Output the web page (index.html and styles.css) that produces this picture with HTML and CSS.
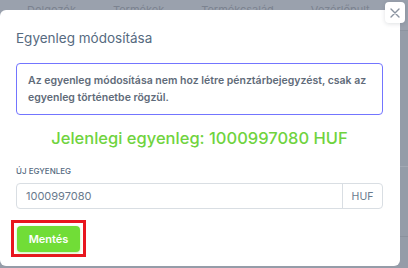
FILE: index.html
```html
<!DOCTYPE html>
<html>
<head>
    <title>Egyenleg módosítása</title>
    <link rel="stylesheet" href="styles.css">
</head>
<body>

    <div class="page">
        <div class="tabs">
            <span class="tab">Dolgozók</span>
            <span class="tab">Termékek</span>
            <span class="tab">Termékcsalád</span>
            <span class="tab">Vezérlőpult</span>
        </div>
        <div class="row row-first"></div>
        <div class="row row-mid"></div>
        <div class="row row-last"></div>
    </div>

    <div class="modal">
        <button class="modal-close" type="button" aria-label="Bezárás">
            <svg width="10" height="10" viewBox="0 0 10 10">
                <path d="M1 1 L9 9 M9 1 L1 9" stroke="#8a93a0" stroke-width="1.4" stroke-linecap="round" fill="none"/>
            </svg>
        </button>
        <h5 class="modal-title">Egyenleg módosítása</h5>

        <div class="alert">
            Az egyenleg módosítása nem hoz létre pénztárbejegyzést, csak az egyenleg történetbe rögzül.
        </div>

        <h4 class="current">Jelenlegi egyenleg: 1000997080 HUF</h4>

        <form class="balance-form" onsubmit="return false">
            <label class="form-label" for="newBalance">Új egyenleg</label>
            <div class="input-group">
                <input type="text" id="newBalance" value="1000997080">
                <span class="addon">HUF</span>
            </div>
            <div class="highlight">
                <button type="submit" class="btn-save">Mentés</button>
            </div>
        </form>
    </div>

</body>
</html>
```

FILE: styles.css
```css
body {
    margin: 0;
    font-family: Inter, 'Noto Sans', sans-serif;
    background: #959ca8;
    height: 268px;
    overflow: hidden;
}

.tabs {
    display: flex;
    height: 30px;
    padding-left: 27px;
    font-size: 11px;
    color: #7c8390;
    background: #9aa1ad;
}

.tab {
    margin-right: 37px;
    line-height: 10px;
    padding-top: 5px;
}

.row {
    height: 69px;
    border-top: 1px solid #8a919d;
}

.row-first {
    height: 135px;
    border-top: 1px solid #8c939f;
}

.row-mid {
    border-top: 1px solid #a2a8b3;
}

.row-last {
    height: 30px;
}

.modal {
    position: absolute;
    top: 10px;
    left: 0;
    width: 400px;
    height: 256px;
    box-sizing: border-box;
    background: #fff;
    border-radius: 6px;
    padding: 20px 17px 0 16px;
}

.modal-close {
    position: absolute;
    top: -8px;
    right: -5px;
    width: 20px;
    height: 21px;
    padding: 0;
    border: none;
    border-radius: 4px;
    background: #fff;
    box-shadow: 0 1px 4px rgba(34, 48, 62, 0.15);
    display: flex;
    align-items: center;
    justify-content: center;
}

.modal-title {
    margin: 0;
    font-size: 13.5px;
    font-weight: 400;
    line-height: 17px;
    color: #566a7f;
}

.alert {
    margin-top: 16px;
    border: 1px solid #7375ff;
    border-radius: 4px;
    padding: 8px 11px;
    font-size: 10.5px;
    font-weight: 600;
    line-height: 17px;
    color: #5f6b79;
}

.current {
    margin: 13px 0 0;
    text-align: center;
    font-size: 16.5px;
    font-weight: 500;
    line-height: 20px;
    color: #6fd33e;
}

.balance-form {
    margin-top: 18px;
}

.form-label {
    display: block;
    font-size: 8px;
    font-weight: 500;
    line-height: 11px;
    text-transform: uppercase;
    color: #566a7f;
    margin-bottom: 6px;
}

.input-group {
    display: flex;
    height: 26px;
    border: 1px solid #d9dee3;
    border-radius: 4px;
    box-sizing: border-box;
}

.input-group input {
    flex: 1;
    min-width: 0;
    border: none;
    outline: none;
    padding: 0 9px;
    font-family: inherit;
    font-size: 11px;
    color: #697a8d;
    background: transparent;
}

.addon {
    width: 39px;
    border-left: 1px solid #d9dee3;
    display: flex;
    align-items: center;
    justify-content: center;
    font-size: 10.5px;
    color: #697a8d;
}

.highlight {
    margin-top: 11px;
    margin-left: -5px;
    width: 63px;
    border: 3px solid #e8161e;
    padding: 3px 3px 2px;
}

.btn-save {
    display: block;
    width: 63px;
    height: 26px;
    border: none;
    border-radius: 4px;
    background: #71dd37;
    box-shadow: 0 1px 3px rgba(113, 221, 55, 0.4);
    color: #fff;
    font-family: inherit;
    font-size: 11px;
    font-weight: 600;
    padding: 0;
}
```
